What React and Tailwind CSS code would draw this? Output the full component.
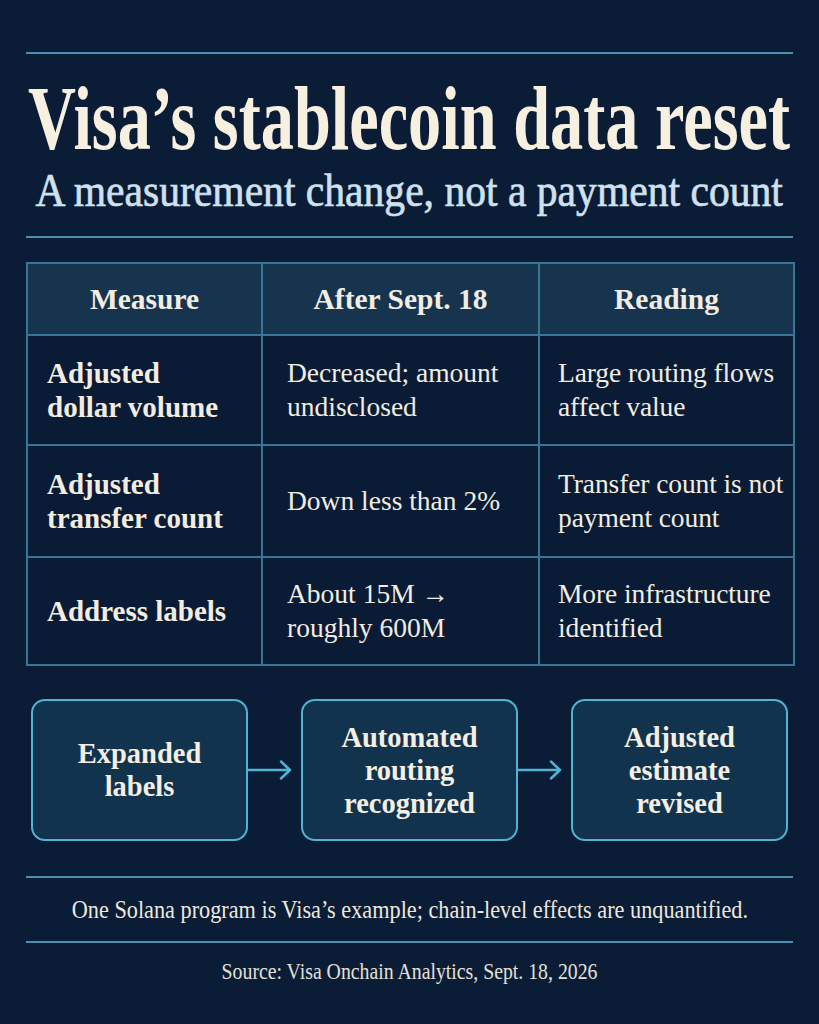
import React from 'react';

const rows = [
  { measure: ['Adjusted', 'dollar volume'], after: ['Decreased; amount', 'undisclosed'], reading: ['Large routing flows', 'affect value'], h: 'h-[110px]' },
  { measure: ['Adjusted', 'transfer count'], after: ['Down less than 2%'], reading: ['Transfer count is not', 'payment count'], h: 'h-[112px]' },
  { measure: ['Address labels'], after: ['About 15M \u2192', 'roughly 600M'], reading: ['More infrastructure', 'identified'], h: 'h-[108px]' },
];

const steps = [
  ['Expanded', 'labels'],
  ['Automated', 'routing', 'recognized'],
  ['Adjusted', 'estimate', 'revised'],
];

function Lines({ lines }) {
  return lines.map((l, i) => <div key={i}>{l}</div>);
}

function Arrow() {
  return (
    <svg width="53" height="24" viewBox="0 0 53 24" className="shrink-0">
      <path d="M0 12 H42 M33 3.5 L42 12 L33 20.5" fill="none" stroke="#4fb3d1" strokeWidth="2.5" strokeLinecap="round" strokeLinejoin="round" />
    </svg>
  );
}

export default function App() {
  return (
    <div className="w-[819px] h-[1024px] bg-[#0b1d36] px-[26px] pt-[52px] font-['Liberation_Serif',serif] text-[#f2ece1]">
      <div className="h-[2px] bg-[#4a8fb2]" />

      {/* title */}
      <div className="mt-[20px] flex justify-center">
        <h1 className="text-[90px] leading-[90px] font-bold whitespace-nowrap scale-x-[0.737] text-[#f7efe0]">
          Visa’s stablecoin data reset
        </h1>
      </div>
      <div className="mt-[3px] flex justify-center">
        <h2 className="text-[47px] leading-[46px] whitespace-nowrap scale-x-[0.885] text-[#cfe0ee] [-webkit-text-stroke:0.7px_#cfe0ee]">
          A measurement change, not a payment count
        </h2>
      </div>

      <div className="mt-[23px] h-[2px] bg-[#4a8fb2]" />

      {/* table */}
      <table className="mt-[24px] w-[767px] border-collapse border-2 border-[#3a7596] table-fixed">
        <colgroup>
          <col className="w-[235px]" />
          <col className="w-[277px]" />
          <col className="w-[255px]" />
        </colgroup>
        <thead>
          <tr className="h-[72px] bg-[#17344f]">
            <th className="border-2 border-[#3a7596] text-[29.5px] font-bold">Measure</th>
            <th className="border-2 border-[#3a7596] text-[29.5px] font-bold">After Sept. 18</th>
            <th className="border-2 border-[#3a7596] text-[29.5px] font-bold">Reading</th>
          </tr>
        </thead>
        <tbody>
          {rows.map((r, i) => (
            <tr key={i} className={`${r.h} bg-[#0a1c35]`}>
              <td className="border-2 border-[#3a7596] pl-[19px] text-[29px] leading-[34px] font-bold">
                <Lines lines={r.measure} />
              </td>
              <td className="border-2 border-[#3a7596] pl-[24px] text-[27.5px] leading-[34px]">
                <Lines lines={r.after} />
              </td>
              <td className="border-2 border-[#3a7596] pl-[18px] text-[27.5px] leading-[34px] tracking-[-0.1px]">
                <Lines lines={r.reading} />
              </td>
            </tr>
          ))}
        </tbody>
      </table>

      {/* flow */}
      <div className="mt-[33px] flex items-center px-[5px]">
        {steps.map((s, i) => (
          <React.Fragment key={i}>
            {i > 0 && <Arrow />}
            <div className="w-[217px] h-[142px] shrink-0 rounded-[14px] border-2 border-[#4fb3d1] bg-[#12334d] flex flex-col items-center justify-center text-center text-[28.5px] leading-[33px] font-bold text-[#f4eee3]">
              <Lines lines={s} />
            </div>
          </React.Fragment>
        ))}
      </div>

      <div className="mt-[35px] h-[2px] bg-[#4a8fb2]" />
      <div className="h-[63px] flex items-center justify-center">
        <p className="text-[25px] whitespace-nowrap scale-x-[0.89] text-[#ede8df]">
          One Solana program is Visa’s example; chain-level effects are unquantified.
        </p>
      </div>
      <div className="h-[2px] bg-[#4a8fb2]" />
      <div className="h-[58px] flex items-center justify-center">
        <p className="text-[23px] whitespace-nowrap scale-x-[0.86] text-[#e4e0d8]">
          Source: Visa Onchain Analytics, Sept. 18, 2026
        </p>
      </div>
    </div>
  );
}
